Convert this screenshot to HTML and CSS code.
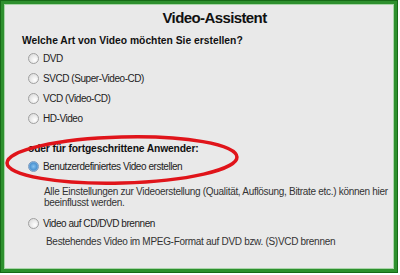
FILE: index.html
```html
<!DOCTYPE html>
<html>
	<head>
		<meta charset="utf-8" />
		<title>Video-Assistent</title>
		<link rel="stylesheet" href="styles.css">
	</head>
	<body>
		<div class="frame">
			<h2 class="title">Video-Assistent</h2>

			<p class="question">Welche Art von Video möchten Sie erstellen?</p>

			<div class="options">
				<label class="opt"><span class="radio"></span>DVD</label>
				<label class="opt"><span class="radio"></span>SVCD (Super-Video-CD)</label>
				<label class="opt"><span class="radio"></span>VCD (Video-CD)</label>
				<label class="opt"><span class="radio"></span>HD-Video</label>
			</div>

			<p class="question advanced">oder für fortgeschrittene Anwender:</p>

			<div class="options">
				<label class="opt"><span class="radio checked"></span>Benutzerdefiniertes Video erstellen</label>
				<p class="desc">Alle Einstellungen zur Videoerstellung (Qualität, Auflösung, Bitrate etc.) können hier beeinflusst werden.</p>
				<label class="opt"><span class="radio"></span>Video auf CD/DVD brennen</label>
				<p class="desc burn">Bestehendes Video im MPEG-Format auf DVD bzw. (S)VCD brennen</p>
			</div>

			<!-- rote Markierung -->
			<svg class="mark" width="244" height="60" viewBox="0 0 244 60">
				<ellipse cx="118" cy="30" rx="115" ry="23" transform="rotate(-1.5 118 30)" fill="none" stroke="#e0141a" stroke-width="3.5"/>
			</svg>
		</div>
	</body>
</html>
```

FILE: styles.css
```css
html, body {
	margin: 0;
	padding: 0;
}

body {
	font-family: "Liberation Sans", "DejaVu Sans", sans-serif;
	font-size: 10px;
	color: #222;
}

.frame {
	position: relative;
	width: 390px;
	height: 265px;
	border: 4px solid #2e902e;
	outline: 1px solid #176a17;
	outline-offset: -1px;
	box-shadow: inset 0 0 0 1px #a8d5a8;
	background: #e9e9e9;
}

.title {
	margin: 0;
	padding: 3px 0 0 31px;
	height: 22px;
	line-height: 22px;
	font-size: 15px;
	letter-spacing: -0.6px;
	text-align: center;
	color: #111;
}

.question {
	margin: 6px 0 0 18px;
	height: 12px;
	line-height: 12px;
	font-weight: bold;
	font-size: 10.3px;
	color: #111;
}

.advanced {
	margin: 15px 0 0 24px;
	letter-spacing: -0.15px;
}

.options {
	padding-left: 24px;
	margin-top: 1px;
	letter-spacing: -0.45px;
}

.opt {
	display: flex;
	align-items: center;
	height: 20px;
}

.radio {
	width: 9px;
	height: 9px;
	border: 1px solid #a0a0a0;
	border-radius: 50%;
	background: radial-gradient(circle at 65% 65%, #ffffff, #d4d4d4);
	margin-right: 4px;
}

.radio.checked {
	border-color: #7d9cc0;
	background: radial-gradient(circle at 50% 50%, #86c2f0 0, #4d94d2 55%, #cfe0f2 100%);
}

.desc {
	margin: 10px 0 5px 16px;
	width: 356px;
	line-height: 11px;
	letter-spacing: -0.3px;
	color: #333;
}

.burn {
	margin: 3px 0 0 18px;
}

.mark {
	position: absolute;
	left: 0;
	top: 126px;
}
```
